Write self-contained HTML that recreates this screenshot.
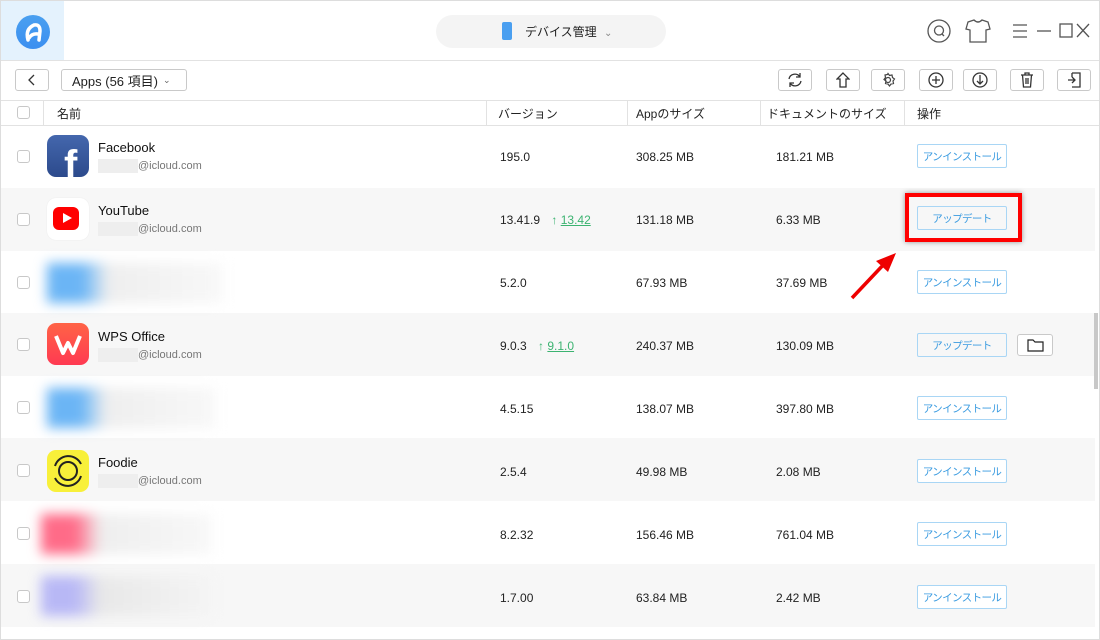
<!DOCTYPE html>
<html><head><meta charset="utf-8"><style>
*{margin:0;padding:0;box-sizing:border-box}
body{width:1100px;height:640px;background:#fff;font-family:"Liberation Sans","Noto Sans CJK JP",sans-serif;font-size:12px;color:#222;position:relative;overflow:hidden}
.frame{position:absolute;inset:0;border:1px solid #ddd}
.abs{position:absolute}
.tb{position:absolute;top:69px;height:22px;border:1px solid #c9c9c9;border-radius:3px;background:#fff;display:flex;align-items:center;justify-content:center}
.row{position:absolute;left:1px;width:1094px;height:63px}
.g{background:#f7f7f7}
.cb{position:absolute;left:17px;width:13px;height:13px;border:1px solid #c8c8c8;border-radius:3px;background:#fff}
.btn{position:absolute;left:917px;width:90px;height:24px;border:1px solid #a9d6f5;border-radius:2px;color:#3a9be0;font-size:10.5px;letter-spacing:-0.6px;display:flex;align-items:center;justify-content:center;background:#fff;white-space:nowrap}
.name{position:absolute;left:98px;font-size:13px;color:#111}
.mail{position:absolute;left:98px;font-size:11px;color:#777}
.mail span{display:inline-block;width:40px;height:14px;background:#eee;vertical-align:middle;margin-right:0}
.icon{position:absolute;left:47px;width:42px;height:42px;border-radius:9px}
.blur{position:absolute;filter:blur(6px)}
</style></head><body>
<div class="frame"></div>
<div class="abs" style="left:1px;top:1px;width:63px;height:59px;background:#e4f2fd"></div>
<div class="abs" style="left:16px;top:15px;width:34px;height:34px;border-radius:50%;background:linear-gradient(#4aa0f0,#3b8ff0)"></div>
<svg class="abs" style="left:16px;top:15px" width="34" height="34"><path d="M12 25 Q9 14 18 10 Q24 9 24 16 L23 25 M13 23 Q16 18 22 19" stroke="#fff" stroke-width="3.5" fill="none" stroke-linecap="round"/></svg>
<div class="abs" style="left:1px;top:60px;width:1098px;height:1px;background:#e2e2e2"></div>
<div class="abs" style="left:436px;top:15px;width:230px;height:33px;border-radius:17px;background:#f4f4f4"></div>
<div class="abs" style="left:502px;top:22px;width:10px;height:18px;border-radius:2px;background:#4a9ff0"></div>
<div class="abs" style="left:525px;top:23px;font-size:12px">デバイス管理 <span style="color:#888;font-size:10px;margin-left:4px">⌄</span></div>
<svg class="abs" style="left:920px;top:15px" width="170" height="34" fill="none" stroke="#555" stroke-width="1.3">
<circle cx="19" cy="16" r="11"/><circle cx="19" cy="15.5" r="4.5"/><path d="M22 19 l2 2"/>
<path d="M48 7 l6 -2 q4 4 8 0 l6 2 l2 7 l-4 1 v12 h-16 v-12 l-4 -1z"/>
<path d="M93 10h14M93 16h14M93 22h14"/><path d="M117 16h14"/><rect x="140" y="9" width="12" height="13"/>
<path d="M157 9l12 13M169 9l-12 13"/></svg>
<div class="tb" style="left:15px;width:34px"><svg width="10" height="12"><path d="M7 1L2 6l5 5" stroke="#333" fill="none" stroke-width="1.3"/></svg></div>
<div class="tb" style="left:61px;width:126px;justify-content:flex-start;padding-left:10px;font-size:13px">Apps (56 項目) <span style="font-size:9px;color:#666;margin-left:5px">⌄</span></div>
<div class="tb" style="left:778px;width:34px"><svg width="16" height="16" fill="none" stroke="#333" stroke-width="1.3"><path d="M2 7a6 6 0 0 1 11-2M14 9a6 6 0 0 1-11 2M13 1v4h-4M3 15v-4h4"/></svg></div>
<div class="tb" style="left:826px;width:34px"><svg width="14" height="16" fill="none" stroke="#333" stroke-width="1.3"><path d="M7 1L1 7h3v8h6V7h3z"/></svg></div>
<div class="tb" style="left:871px;width:34px"><svg width="16" height="16" fill="none" stroke="#444" stroke-width="1.2"><circle cx="8" cy="8" r="2.5"/><path d="M8 1.5l1.5 2 2.5-.5.5 2.5 2 1.5-1.5 2 .5 2.5-2.5.5-1.5 2-1.5-2-2.5-.5.5-2.5-2-1.5 1.5-2-.5-2.5 2.5-.5z"/></svg></div>
<div class="tb" style="left:919px;width:34px"><svg width="16" height="16" fill="none" stroke="#333" stroke-width="1.3"><circle cx="8" cy="8" r="7"/><path d="M8 4v8M4 8h8"/></svg></div>
<div class="tb" style="left:963px;width:34px"><svg width="16" height="16" fill="none" stroke="#333" stroke-width="1.3"><circle cx="8" cy="8" r="7"/><path d="M8 3v9M5 9l3 3 3-3"/></svg></div>
<div class="tb" style="left:1010px;width:34px"><svg width="14" height="16" fill="none" stroke="#333" stroke-width="1.3"><path d="M1 3h12M5 3V1h4v2M2.5 3l1 12h7l1-12M6 6v6M8 6v6"/></svg></div>
<div class="tb" style="left:1057px;width:34px"><svg width="14" height="16" fill="none" stroke="#333" stroke-width="1.3"><path d="M5 1h8v14H5M5 5V1M1 8h7M5 5l3 3-3 3"/></svg></div>
<div class="abs" style="left:1px;top:100px;width:1098px;height:1px;background:#e2e2e2"></div>
<div class="abs" style="left:1px;top:125px;width:1098px;height:1px;background:#e2e2e2"></div>
<div class="cb" style="top:106px"></div>
<div class="abs" style="left:43px;top:101px;width:1px;height:24px;background:#e2e2e2"></div>
<div class="abs" style="left:486px;top:101px;width:1px;height:24px;background:#e2e2e2"></div>
<div class="abs" style="left:627px;top:101px;width:1px;height:24px;background:#e2e2e2"></div>
<div class="abs" style="left:760px;top:101px;width:1px;height:24px;background:#e2e2e2"></div>
<div class="abs" style="left:904px;top:101px;width:1px;height:24px;background:#e2e2e2"></div>
<div class="abs" style="left:57px;top:105px">名前</div>
<div class="abs" style="left:498px;top:105px">バージョン</div>
<div class="abs" style="left:636px;top:105px">Appのサイズ</div>
<div class="abs" style="left:767px;top:105px">ドキュメントのサイズ</div>
<div class="abs" style="left:917px;top:105px">操作</div>

<div class="row" style="top:126px"></div>
<div class="row g" style="top:188px"></div>
<div class="row" style="top:251px"></div>
<div class="row g" style="top:313px"></div>
<div class="row" style="top:376px"></div>
<div class="row g" style="top:438px"></div>
<div class="row" style="top:501px"></div>
<div class="row g" style="top:564px"></div>
<div class="abs" style="left:1094px;top:313px;width:4px;height:76px;background:#c8c8c8"></div>

<div class="cb" style="top:150px"></div><div class="cb" style="top:213px"></div><div class="cb" style="top:276px"></div><div class="cb" style="top:338px"></div><div class="cb" style="top:401px"></div><div class="cb" style="top:464px"></div><div class="cb" style="top:527px"></div><div class="cb" style="top:590px"></div>

<div class="icon" style="top:135px;background:linear-gradient(#4467ad,#2c4a8c);overflow:hidden"><div style="position:absolute;left:17px;top:10px;font:bold 40px 'Liberation Sans';color:#fff;line-height:40px">f</div></div>
<div class="name" style="top:140px">Facebook</div><div class="mail" style="top:159px"><span></span>@icloud.com</div>
<div class="abs" style="left:500px;top:150px">195.0</div><div class="abs" style="left:636px;top:150px">308.25 MB</div><div class="abs" style="left:776px;top:150px">181.21 MB</div>
<div class="btn" style="top:144px">アンインストール</div>
<div class="icon" style="top:198px;background:#fff;box-shadow:0 0 1px #ddd"><div style="position:absolute;left:6px;top:9px;width:26px;height:23px;border-radius:6px;background:#f00"></div><div style="position:absolute;left:16px;top:15px;border-left:9px solid #fff;border-top:5.5px solid transparent;border-bottom:5.5px solid transparent"></div></div>
<div class="name" style="top:203px">YouTube</div><div class="mail" style="top:222px"><span></span>@icloud.com</div>
<div class="abs" style="left:500px;top:213px">13.41.9 <span style="color:#3cb371;margin-left:8px">↑ <u>13.42</u></span></div><div class="abs" style="left:636px;top:213px">131.18 MB</div><div class="abs" style="left:776px;top:213px">6.33 MB</div>
<div class="btn" style="top:206px;background:#f7f7f7">アップデート</div>
<div class="abs" style="left:905px;top:193px;width:117px;height:49px;border:4px solid #f00;box-shadow:0 0 5px rgba(0,0,0,.4)"></div>
<svg class="abs" style="left:848px;top:250px" width="52" height="52"><path d="M4 48L38 12" stroke="#e00" stroke-width="3.5"/><path d="M48 3L28 11 40 22z" fill="#e00"/></svg>
<div class="blur" style="left:47px;top:263px;width:175px;height:40px;background:linear-gradient(90deg,#6bb5f5 20%,#eee 35%,#f8f8f8)"></div>
<div class="abs" style="left:500px;top:276px">5.2.0</div><div class="abs" style="left:636px;top:276px">67.93 MB</div><div class="abs" style="left:776px;top:276px">37.69 MB</div>
<div class="btn" style="top:270px">アンインストール</div>
<div class="icon" style="top:323px;background:linear-gradient(#ff6346,#ff3a52)"><svg width="42" height="42"><path d="M9 13l7 17 5-10 5 10 7-17" stroke="#fff" stroke-width="4" fill="none" stroke-linejoin="round"/></svg></div>
<div class="name" style="top:329px">WPS Office</div><div class="mail" style="top:348px"><span></span>@icloud.com</div>
<div class="abs" style="left:500px;top:339px">9.0.3 <span style="color:#3cb371;margin-left:8px">↑ <u>9.1.0</u></span></div><div class="abs" style="left:636px;top:339px">240.37 MB</div><div class="abs" style="left:776px;top:339px">130.09 MB</div>
<div class="btn" style="top:333px;background:#f7f7f7">アップデート</div>
<div class="abs" style="left:1017px;top:334px;width:36px;height:22px;border:1px solid #c9c9c9;border-radius:3px;background:#fff"><svg width="34" height="20"><path d="M10 5h5l2 2h8v9H10z" stroke="#222" fill="none" stroke-width="1.2"/></svg></div>
<div class="blur" style="left:47px;top:388px;width:168px;height:40px;background:linear-gradient(90deg,#6bb5f5 20%,#eee 35%,#f8f8f8)"></div>
<div class="abs" style="left:500px;top:402px">4.5.15</div><div class="abs" style="left:636px;top:402px">138.07 MB</div><div class="abs" style="left:776px;top:402px">397.80 MB</div>
<div class="btn" style="top:396px">アンインストール</div>
<div class="icon" style="top:450px;background:#f8f03a"><svg width="42" height="42" fill="none" stroke="#222" stroke-width="2"><path d="M8 16a14 14 0 0 1 26-2M34 26a14 14 0 0 1-26 2"/><circle cx="21" cy="21" r="9"/></svg></div>
<div class="name" style="top:455px">Foodie</div><div class="mail" style="top:474px"><span></span>@icloud.com</div>
<div class="abs" style="left:500px;top:465px">2.5.4</div><div class="abs" style="left:636px;top:465px">49.98 MB</div><div class="abs" style="left:776px;top:465px">2.08 MB</div>
<div class="btn" style="top:459px">アンインストール</div>
<div class="blur" style="left:41px;top:514px;width:170px;height:40px;background:linear-gradient(90deg,#ff6b88 20%,#eee 35%,#f8f8f8)"></div>
<div class="abs" style="left:500px;top:528px">8.2.32</div><div class="abs" style="left:636px;top:528px">156.46 MB</div><div class="abs" style="left:776px;top:528px">761.04 MB</div>
<div class="btn" style="top:522px">アンインストール</div>
<div class="blur" style="left:41px;top:576px;width:170px;height:40px;background:linear-gradient(90deg,#b8b8f5 20%,#e8e8e8 35%,#f4f4f4)"></div>
<div class="abs" style="left:500px;top:591px">1.7.00</div><div class="abs" style="left:636px;top:591px">63.84 MB</div><div class="abs" style="left:776px;top:591px">2.42 MB</div>
<div class="btn" style="top:585px">アンインストール</div>
</body></html>
